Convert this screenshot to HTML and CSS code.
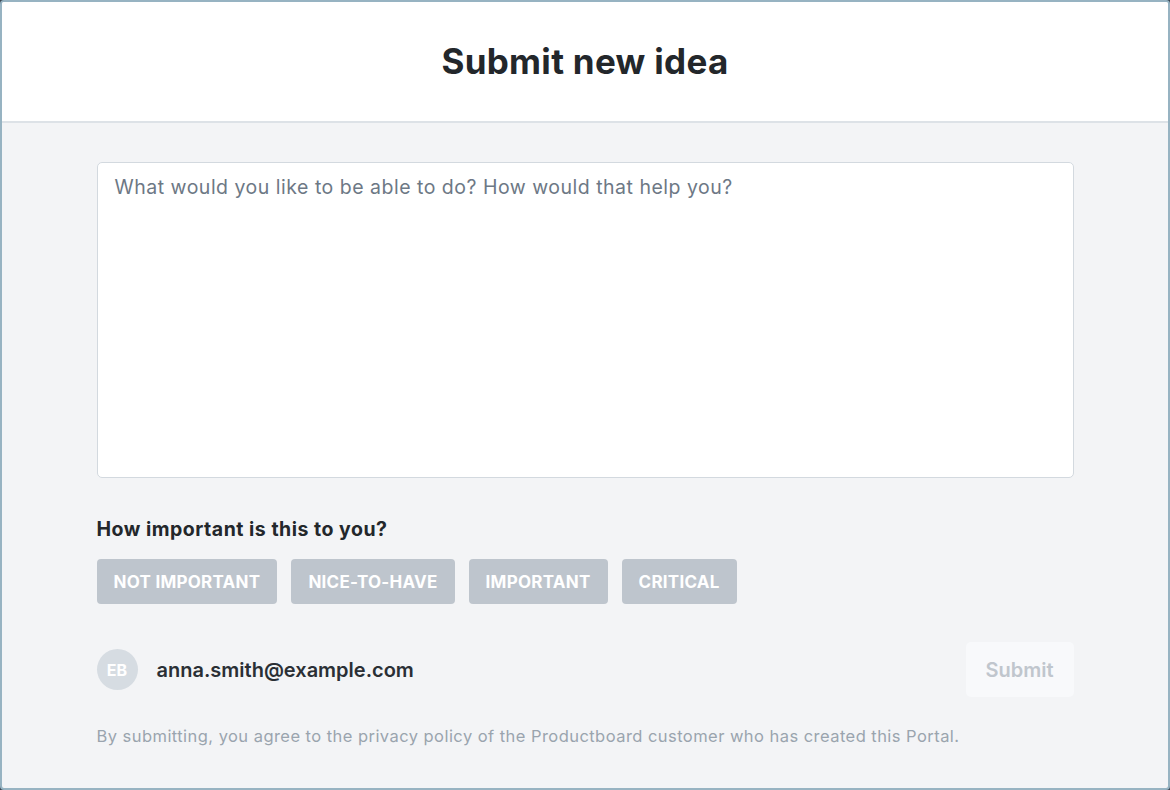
FILE: index.html
```html
<!DOCTYPE html>
<html>
<head>
<meta charset="utf-8">
<link rel="stylesheet" href="styles.css">
</head>
<body>
<div class="frame">
  <header class="header">
    <h1 class="title">Submit new idea</h1>
  </header>
  <main class="main">
    <div class="content">
      <div class="textarea">What would you like to be able to do? How would that help you?</div>
      <div class="label">How important is this to you?</div>
      <div class="options">
        <span class="opt">NOT IMPORTANT</span>
        <span class="opt">NICE-TO-HAVE</span>
        <span class="opt">IMPORTANT</span>
        <span class="opt">CRITICAL</span>
      </div>
      <div class="user-row">
        <div class="user">
          <span class="avatar">EB</span>
          <span class="email">anna.smith@example.com</span>
        </div>
        <span class="submit">Submit</span>
      </div>
      <p class="note">By submitting, you agree to the privacy policy of the Productboard customer who has created this Portal.</p>
    </div>
  </main>
</div>
</body>
</html>
```

FILE: styles.css
```css
html, body {
  margin: 0;
  padding: 0;
  background: #3b4652;
}
body {
  font-family: Inter, "Liberation Sans", sans-serif;
  color: #23272b;
}
.frame {
  box-sizing: border-box;
  width: 1170px;
  height: 790px;
  border: 2px solid #97b3c2;
  border-radius: 4px;
  background: #f3f4f6;
  overflow: hidden;
  display: flex;
  flex-direction: column;
}
.header {
  background: #fff;
  height: 119px;
  border-bottom: 2px solid #dde2e7;
  display: flex;
  align-items: center;
  justify-content: center;
}
.title {
  margin: 0 0 2px;
  font-size: 35px;
  font-weight: 700;
  letter-spacing: 0.3px;
  color: #23272b;
}
.main {
  flex: 1;
}
.content {
  width: 977px;
  margin: 0 auto;
  padding-top: 39px;
}
.textarea {
  box-sizing: border-box;
  height: 316px;
  background: #fff;
  border: 1px solid #d3d9df;
  border-radius: 5px;
  padding: 12px 17px;
  font-size: 19.5px;
  letter-spacing: 0.5px;
  line-height: 24px;
  color: #6d7885;
}
.label {
  margin-top: 39px;
  font-size: 19.5px;
  font-weight: 700;
  letter-spacing: 0.5px;
  line-height: 24px;
  color: #23272b;
}
.options {
  display: flex;
  gap: 14px;
  margin-top: 18px;
}
.opt {
  height: 45px;
  padding: 0 17px;
  display: flex;
  align-items: center;
  background: #bec5cd;
  border-radius: 4px;
  color: #fff;
  font-weight: 700;
  font-size: 17px;
  letter-spacing: 0.25px;
}
.user-row {
  margin-top: 38px;
  display: flex;
  align-items: center;
  justify-content: space-between;
}
.user {
  display: flex;
  align-items: center;
  gap: 19px;
}
.avatar {
  width: 41px;
  height: 41px;
  border-radius: 50%;
  background: #d6dce2;
  color: #fff;
  font-weight: 700;
  font-size: 16px;
  display: flex;
  align-items: center;
  justify-content: center;
}
.email {
  font-size: 20px;
  font-weight: 600;
  color: #2a2f35;
}
.submit {
  width: 108px;
  height: 55px;
  border-radius: 5px;
  background: #f8f9fb;
  color: #c0c6cd;
  font-size: 20px;
  font-weight: 600;
  display: flex;
  align-items: center;
  justify-content: center;
}
.note {
  margin: 28px 0 0;
  font-size: 16.5px;
  letter-spacing: 0.45px;
  line-height: 22px;
  color: #9aa4ae;
}
```
